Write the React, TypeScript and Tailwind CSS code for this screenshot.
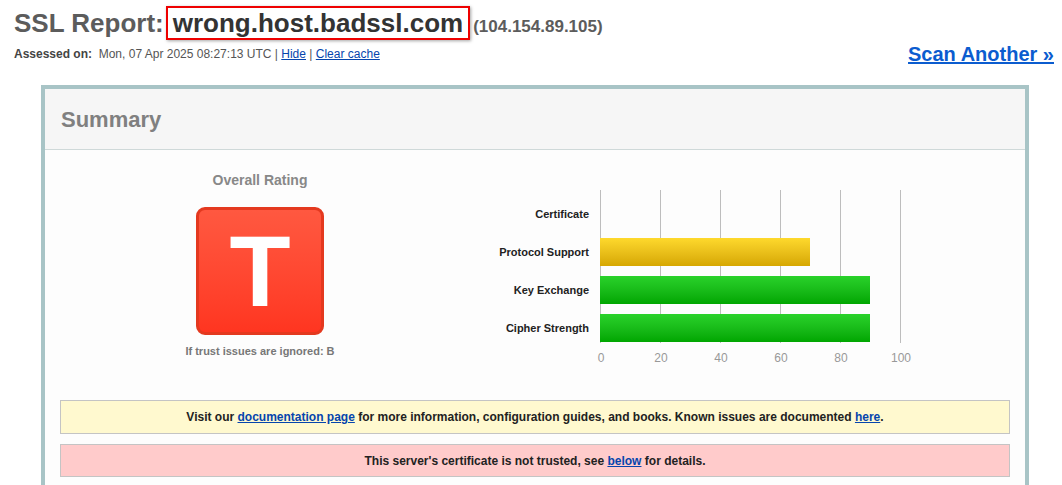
const rows = [
  { label: 'Certificate', value: 0, kind: 'none' },
  { label: 'Protocol Support', value: 70, kind: 'yellow' },
  { label: 'Key Exchange', value: 90, kind: 'green' },
  { label: 'Cipher Strength', value: 90, kind: 'green' },
];

const ticks = [0, 20, 40, 60, 80, 100];

function RatingChart() {
  return (
    <div className="flex pt-[40px]">
      <div className="w-[140px] pr-[11px]">
        <div className="flex flex-col gap-[10px] pt-[10px]">
          {rows.map((r) => (
            <div
              key={r.label}
              className="h-[28px] flex items-center justify-end text-[11px] font-bold text-[#222]"
            >
              {r.label}
            </div>
          ))}
        </div>
      </div>
      <div className="w-[300px]">
        <div className="relative h-[153px]">
          {ticks.map((t, i) => (
            <div
              key={t}
              className="absolute top-0 bottom-0 w-px bg-[#bdbdbd]"
              style={{ left: i * 60 }}
            />
          ))}
          <div className="relative flex flex-col gap-[10px] pt-[10px]">
            {rows.map((r) => (
              <div key={r.label} className="h-[28px]">
                {r.kind === 'yellow' && (
                  <div
                    className="h-full bg-gradient-to-b from-[#fed92c] to-[#d6a700]"
                    style={{ width: r.value * 3 }}
                  />
                )}
                {r.kind === 'green' && (
                  <div
                    className="h-full bg-gradient-to-b from-[#29d22a] to-[#00a600]"
                    style={{ width: r.value * 3 }}
                  />
                )}
              </div>
            ))}
          </div>
        </div>
        <div className="relative h-[24px]">
          {ticks.map((t, i) => (
            <span
              key={t}
              className="absolute top-[8px] -translate-x-1/2 text-[12px] leading-[14px] text-[#999]"
              style={{ left: i * 60 + 1 }}
            >
              {t}
            </span>
          ))}
        </div>
      </div>
    </div>
  );
}

export default function App() {
  return (
    <div className="min-h-screen bg-white font-['Liberation_Sans',Arial,sans-serif] text-[#333]">
      <div className="pl-[14px] pr-[8px] pt-[6px]">
        <h1 className="text-[26px] font-bold leading-[34px] text-[#5c5c5c] whitespace-nowrap">
          SSL Report:
          <span className="ml-[2px] border-2 border-[#e00] px-[5px] text-[#333] shadow-[1px_1px_3px_rgba(0,0,0,0.35)]">
            wrong.host.badssl.com
          </span>
          <span className="ml-[3px] text-[17px] text-[#5c5c5c]">(104.154.89.105)</span>
        </h1>
        <div className="flex items-center justify-between mt-[-5px]">
          <div className="text-[12px] text-[#555]">
            <span className="font-bold text-[#444]">Assessed on:</span>
            &nbsp; Mon, 07 Apr 2025 08:27:13 UTC |{' '}
            <a href="#" className="text-[#0645ad] underline">
              Hide
            </a>{' '}
            |{' '}
            <a href="#" className="text-[#0645ad] underline">
              Clear cache
            </a>
          </div>
          <a href="#" className="text-[20px] font-bold text-[#0b5ccf] underline">
            Scan Another &raquo;
          </a>
        </div>
      </div>

      <div className="ml-[41px] mt-[16px] w-[988px] border-4 border-[#a8c4c6]">
        <div className="h-[61px] bg-[#f6f6f6] border-b border-[#cfd9d9] px-[16px] flex items-center">
          <h2 className="text-[22px] font-bold text-[#808080]">Summary</h2>
        </div>

        <div className="bg-[#fdfdfd] px-[15px] pb-[10px]">
          <div className="flex">
            <div className="w-[400px] flex flex-col items-center pt-[22px]">
              <div className="text-[14px] leading-[16px] font-bold text-[#888]">Overall Rating</div>
              <div className="mt-[19px] w-[128px] h-[128px] rounded-[9px] border-[3px] border-[#e4391f] bg-gradient-to-b from-[#ff5840] to-[#ff3520] flex items-center justify-center">
                <span className="text-[100px] leading-none font-bold text-white">T</span>
              </div>
              <div className="mt-[9px] text-[11px] leading-[14px] font-bold text-[#777]">
                If trust issues are ignored: B
              </div>
            </div>
            <RatingChart />
          </div>

          <div className="mt-[33px] h-[34px] border border-[#c4c4c4] bg-[#fff9cf] flex items-center justify-center text-[12px] font-bold text-[#222]">
            <span>
              Visit our{' '}
              <a href="#" className="text-[#0645ad] underline">
                documentation page
              </a>{' '}
              for more information, configuration guides, and books. Known issues are documented{' '}
              <a href="#" className="text-[#0645ad] underline">
                here
              </a>
              .
            </span>
          </div>
          <div className="mt-[10px] h-[33px] border border-[#c4c4c4] bg-[#ffcbcb] flex items-center justify-center text-[12px] font-bold text-[#222]">
            <span>
              This server&apos;s certificate is not trusted, see{' '}
              <a href="#" className="text-[#0645ad] underline">
                below
              </a>{' '}
              for details.
            </span>
          </div>
        </div>
      </div>
    </div>
  );
}
